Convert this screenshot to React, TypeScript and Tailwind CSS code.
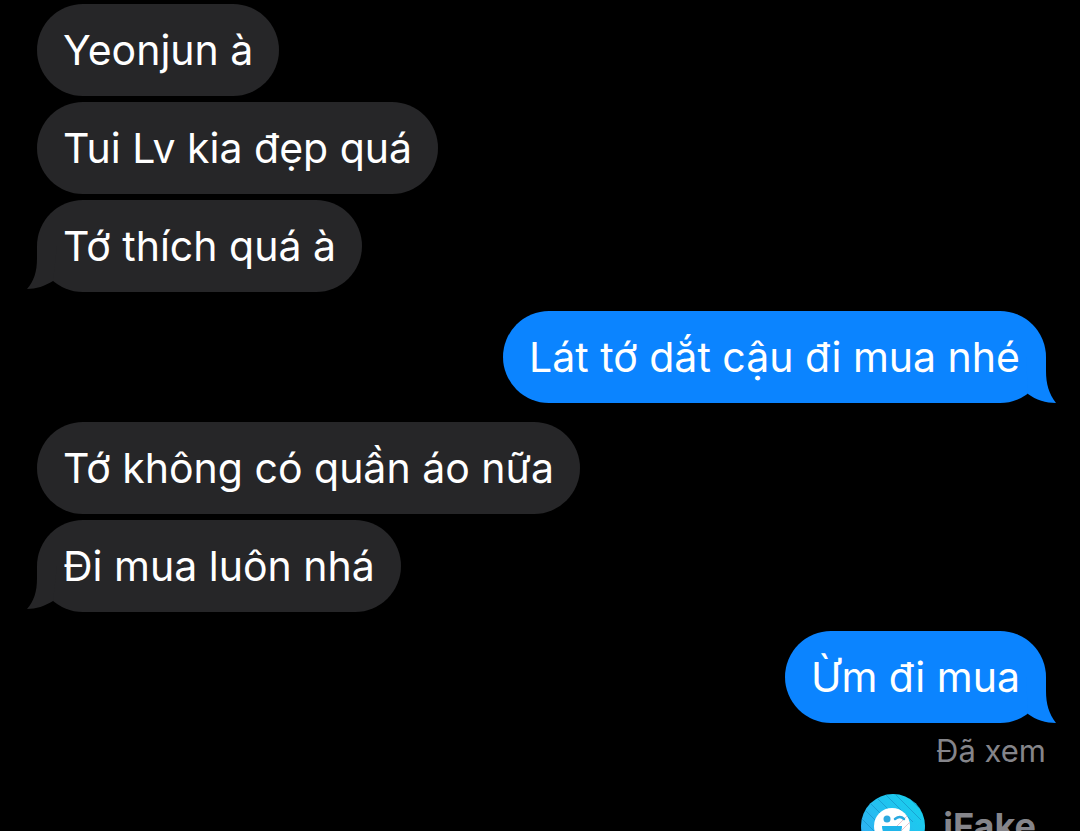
import clsx from 'clsx';

type Message = {
  text: string;
  seen?: boolean;
};

type MessageGroup = {
  from: 'them' | 'me';
  messages: Message[];
};

const groups: MessageGroup[] = [
  {
    from: 'them',
    messages: [{ text: 'Yeonjun à' }, { text: 'Tui Lv kia đẹp quá' }, { text: 'Tớ thích quá à' }],
  },
  { from: 'me', messages: [{ text: 'Lát tớ dắt cậu đi mua nhé' }] },
  {
    from: 'them',
    messages: [{ text: 'Tớ không có quần áo nữa' }, { text: 'Đi mua luôn nhá' }],
  },
  { from: 'me', messages: [{ text: 'Ừm đi mua', seen: true }] },
];

export default function App() {
  return (
    <main className="flex h-screen flex-col overflow-hidden bg-black pt-1 pr-[34px] pl-[37px] font-['Inter',sans-serif]">
      <div className="flex shrink-0 flex-col gap-[19px]">
        {groups.map((group, index) => (
          <Group key={index} group={group} />
        ))}
      </div>
      <footer className="flex shrink-0 items-center justify-end gap-[18px] pt-[22px] pr-2.5">
        <FakeLogo />
        <span className="text-[36px] leading-[60px] font-bold text-[#85858a]">iFake</span>
      </footer>
    </main>
  );
}

function Group({ group }: { group: MessageGroup }) {
  const mine = group.from === 'me';

  return (
    <section className={clsx('flex flex-col gap-1.5', mine ? 'items-end' : 'items-start')}>
      {group.messages.map((message, index) => (
        <div key={message.text} className="flex flex-col items-end">
          <Bubble text={message.text} mine={mine} tail={index === group.messages.length - 1} />
          {message.seen && (
            <p className="mt-[7px] text-[31px] leading-[42px] text-[#85858a]">Đã xem</p>
          )}
        </div>
      ))}
    </section>
  );
}

function Bubble({ text, mine, tail }: { text: string; mine: boolean; tail: boolean }) {
  return (
    <div
      className={clsx(
        'relative w-fit rounded-[46px] px-[26px] py-5 text-[41px] leading-[52px] text-white',
        mine ? 'bg-[#0b84ff]' : 'bg-[#262628]',
      )}
    >
      {tail && <Tail mine={mine} />}
      <p className="relative">{text}</p>
    </div>
  );
}

function Tail({ mine }: { mine: boolean }) {
  return mine ? (
    <svg
      className="absolute -right-2.5 bottom-0 h-[46px] w-[30px] fill-[#0b84ff]"
      viewBox="0 0 30 46"
      aria-hidden="true"
    >
      <path d="M20 0V14C20 27 23 37 30 46C20 46 10 43 2 37L0 0Z" />
    </svg>
  ) : (
    <svg
      className="absolute bottom-0 -left-2.5 h-[46px] w-[30px] fill-[#262628]"
      viewBox="0 0 30 46"
      aria-hidden="true"
    >
      <path d="M10 0V12C10 26 7 35 0 43C9 43 18 40 26 35L30 0Z" />
    </svg>
  );
}

function FakeLogo() {
  return (
    <svg className="size-16" viewBox="0 0 64 64" aria-hidden="true">
      <defs>
        <linearGradient id="logo-fill" x1="0" y1="1" x2="1" y2="0">
          <stop offset="0" stopColor="#35a9f5" />
          <stop offset="1" stopColor="#16d4ec" />
        </linearGradient>
        <clipPath id="logo-clip">
          <circle cx="32" cy="32" r="32" />
        </clipPath>
      </defs>
      <g clipPath="url(#logo-clip)">
        <rect width="64" height="64" fill="url(#logo-fill)" />
        <path
          d="M-4 20L26 50M2 14L32 44M8 8L38 38M14 2L44 32M22 -2L52 28M30 -4L60 26M38 -6L68 24M-8 28L20 56"
          stroke="#168fc5"
          strokeWidth="1"
          opacity="0.65"
        />
        <circle cx="31" cy="32" r="18" fill="#fff" />
        <path d="M34 34L46 22M39 38L49 28" stroke="#e9c4cd" strokeWidth="1" />
        <circle cx="26" cy="25" r="3.5" fill="#2ba9df" />
        <path d="M34 25Q39 21 43 25" fill="none" stroke="#2ba9df" strokeWidth="2.5" strokeLinecap="round" />
        <path d="M21 32H41C41 39 37 44 31 44S21 39 21 32Z" fill="#20b5ea" />
      </g>
    </svg>
  );
}
